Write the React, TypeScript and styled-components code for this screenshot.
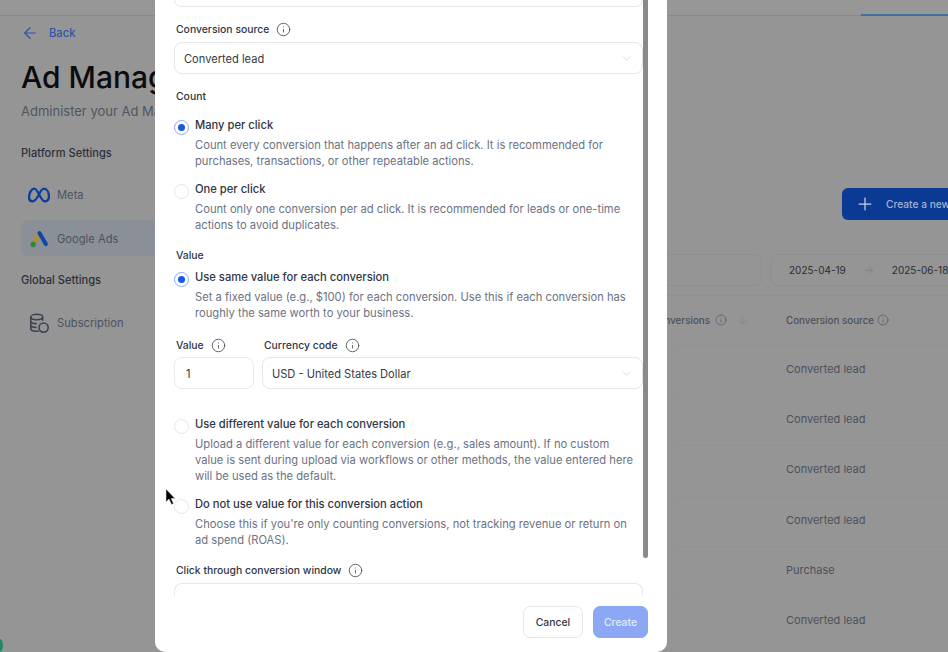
import React from "react";
import styled, { createGlobalStyle } from "styled-components";
import { ArrowLeft, ArrowDown, ArrowRight, ChevronDown, Info, Plus } from "lucide-react";

const GlobalStyle = createGlobalStyle`
  html, body {
    margin: 0;
    padding: 0;
    height: 100%;
    overflow: hidden;
    font-family: Inter, "Liberation Sans", sans-serif;
  }
  * { box-sizing: border-box; }
`;

const Page = styled.div`
  position: relative;
  display: flex;
  flex-direction: column;
  width: 948px;
  height: 652px;
  overflow: hidden;
  background: #959595;
`;

const TopBar = styled.div`
  flex: none;
  display: flex;
  justify-content: flex-end;
  height: 16px;
  border-bottom: 1px solid #8a8a8a;
  background: #979797;
`;

const TabLine = styled.div`
  width: 87px;
  height: 16px;
  border-bottom: 2px solid #3f6f9e;
`;

const Content = styled.div`
  flex: 1;
  display: flex;
  min-height: 0;
`;

const Sidebar = styled.aside`
  flex: none;
  width: 240px;
  padding: 9px 0 0 21px;
`;

const BackLink = styled.div`
  display: flex;
  align-items: center;
  gap: 10px;
  height: 16px;
  color: #2a55a8;
  font-size: 11.2px;
  font-weight: 500;
  svg { flex: none; }
`;

const Title = styled.h1`
  margin: 18px 0 0;
  font-size: 30px;
  line-height: 36px;
  font-weight: 500;
  color: #0c0c0e;
  white-space: nowrap;
`;

const Subtitle = styled.p`
  margin: 6px 0 0;
  font-size: 13px;
  line-height: 20px;
  color: #4f5564;
  white-space: nowrap;
`;

const NavHeading = styled.div<{ $top: number }>`
  margin-top: ${(p) => p.$top}px;
  font-size: 11.1px;
  line-height: 16px;
  font-weight: 500;
  color: #2b303a;
`;

const NavItem = styled.div<{ $active?: boolean; $top: number }>`
  display: flex;
  align-items: center;
  gap: 7px;
  height: 36px;
  margin-top: ${(p) => p.$top}px;
  padding: 1px 0 0 7px;
  border-radius: 8px;
  font-size: 11.2px;
  color: #4c5361;
  background: ${(p) => (p.$active ? "#8b8f97" : "transparent")};
`;

const NavIcon = styled.svg`
  flex: none;
  width: 22px;
  height: 22px;
`;

const Main = styled.main`
  flex: none;
  width: 900px;
  padding-top: 172px;
`;

const CreateNew = styled.div`
  display: flex;
  align-items: center;
  gap: 11px;
  width: 160px;
  height: 32px;
  margin-left: 602px;
  padding-left: 13px;
  border-radius: 6px;
  background: #0a3a94;
  color: #a5b3cf;
  font-size: 10.2px;
  font-weight: 500;
  white-space: nowrap;
  svg { flex: none; color: #c9d2e2; }
`;

const FilterRow = styled.div`
  display: flex;
  gap: 8px;
  height: 32px;
  margin-top: 34px;
  margin-left: 300px;
`;

const FilterBox = styled.div<{ $width: number }>`
  display: flex;
  align-items: center;
  gap: 17px;
  width: ${(p) => p.$width}px;
  padding-left: 18px;
  border: 1px solid #8f8f8f;
  border-radius: 8px;
  font-size: 10px;
  color: #2b2d33;
  white-space: nowrap;
  svg { flex: none; color: #7b7b7b; }
`;

const TableHead = styled.div`
  display: grid;
  grid-template-columns: 121px 1fr;
  height: 50px;
  margin-top: 9px;
  margin-left: 425px;
  border-top: 1px solid #909090;
  align-items: center;
  font-size: 9.8px;
  font-weight: 500;
  color: #4c515c;
`;

const SortCell = styled.div`
  display: flex;
  align-items: center;
  justify-content: flex-end;
  gap: 10px;
  padding-right: 38px;
  margin-top: -1px;
  white-space: nowrap;
  svg { flex: none; }
`;

const SortTitle = styled.span`
  margin-right: -5px;
`;

const HeadCell = styled.div`
  display: flex;
  align-items: center;
  gap: 3px;
  margin-top: -1px;
  white-space: nowrap;
  svg { flex: none; }
`;

const SortIcon = styled(ArrowDown)`
  color: #7f7f7f;
`;

const TableRow = styled.div`
  display: flex;
  align-items: center;
  height: 50.2px;
  margin-left: 437px;
  padding: 0 0 3px 108px;
  border-top: 1px solid #929292;
  border-left: 1px solid #929292;
  font-size: 11px;
  color: #4c515c;
`;

const DotCorner = styled.div`
  position: absolute;
  left: 0;
  bottom: 0;
  width: 8px;
  height: 13px;
  overflow: hidden;
`;

const GreenDot = styled.div`
  width: 7px;
  height: 13px;
  margin-left: -4px;
  border-radius: 50%;
  background: #1c8a60;
`;

const Modal = styled.div`
  position: absolute;
  top: 0;
  left: 155px;
  display: flex;
  flex-direction: column;
  width: 512px;
  height: 652px;
  border-radius: 0 0 10px 10px;
  background: #fff;
`;

const ModalBody = styled.div`
  position: relative;
  flex: none;
  height: 596px;
  padding: 0 24px 0 19px;
  overflow: hidden;
`;

const ScrollThumb = styled.div`
  position: absolute;
  top: 0;
  right: 19px;
  width: 5px;
  height: 558px;
  border-radius: 0 0 3px 3px;
  background: #8a8a8a;
`;

const CutFieldTop = styled.div`
  height: 7px;
  border: 1px solid #e7e8ec;
  border-top: 0;
  border-radius: 0 0 8px 8px;
`;

const CutFieldBottom = styled.div`
  height: 14px;
  margin-top: 5px;
  border: 1px solid #e7e8ec;
  border-bottom: 0;
  border-radius: 8px 8px 0 0;
`;

const Label = styled.div<{ $top?: number }>`
  display: flex;
  align-items: center;
  gap: 7px;
  height: 16px;
  margin-top: ${(p) => p.$top ?? 0}px;
  margin-left: 2px;
  font-size: 10.4px;
  font-weight: 500;
  color: #2f3644;
  white-space: nowrap;
  svg { flex: none; color: #4a5160; }
`;

const Select = styled.div`
  display: flex;
  align-items: center;
  justify-content: space-between;
  flex: 1;
  height: 32px;
  padding: 1px 9px 0;
  border: 1px solid #e4e6ea;
  border-radius: 8px;
  font-size: 11.1px;
  color: #333945;
  svg { color: #c3c6cd; }
`;

const SelectSpaced = styled(Select)`
  margin-top: 5px;
`;

const ValueInput = styled.div`
  display: flex;
  align-items: center;
  height: 32px;
  padding: 1px 0 0 11px;
  border: 1px solid #e9eaee;
  border-radius: 8px;
  font-size: 11.1px;
  color: #333945;
`;

const RadioRow = styled.div<{ $top: number }>`
  display: grid;
  grid-template-columns: 15px 1fr;
  column-gap: 6px;
  margin-top: ${(p) => p.$top}px;
`;

const Radio = styled.span<{ $checked?: boolean }>`
  display: flex;
  align-items: center;
  justify-content: center;
  width: 15px;
  height: 15px;
  margin-top: 3px;
  border-radius: 50%;
  border: 1px solid ${(p) => (p.$checked ? "#8aa8f5" : "#e6e7eb")};
  &::after {
    content: "";
    display: ${(p) => (p.$checked ? "block" : "none")};
    width: 7px;
    height: 7px;
    border-radius: 50%;
    background: #1557e6;
  }
`;

const RadioTitle = styled.div`
  font-size: 11.2px;
  line-height: 16px;
  font-weight: 500;
  color: #2f3644;
`;

const RadioDesc = styled.div`
  max-width: 440px;
  margin-top: 4px;
  font-size: 11.2px;
  line-height: 16px;
  color: #6b7283;
`;

const ValueGrid = styled.div`
  display: grid;
  grid-template-columns: 80px 1fr;
  column-gap: 8px;
  margin-top: 16px;
`;

const FieldColumn = styled.div`
  display: flex;
  flex-direction: column;
  gap: 4px;
`;

const ModalFooter = styled.div`
  display: flex;
  justify-content: flex-end;
  gap: 10px;
  padding: 10px 19px 0 0;
`;

const Button = styled.div<{ $primary?: boolean; $width: number }>`
  display: flex;
  align-items: center;
  justify-content: center;
  width: ${(p) => p.$width}px;
  height: 32px;
  border-radius: 7px;
  border: 1px solid ${(p) => (p.$primary ? "#8ca8f4" : "#e4e6ea")};
  background: ${(p) => (p.$primary ? "#8ca8f4" : "#fff")};
  color: ${(p) => (p.$primary ? "#e3eafc" : "#2f3644")};
  font-size: 10.4px;
  font-weight: 500;
`;

const Cursor = styled.svg`
  position: absolute;
  left: 165px;
  top: 488px;
  width: 12px;
  height: 18px;
`;

const InfoIcon = () => <Info size={15} strokeWidth={1.4} />;

const rows = [
  "Converted lead",
  "Converted lead",
  "Converted lead",
  "Converted lead",
  "Purchase",
  "Converted lead",
];

export default function App() {
  return (
    <>
      <GlobalStyle />
      <Page>
        <TopBar>
          <TabLine />
        </TopBar>
        <Content>
          <Sidebar>
            <BackLink>
              <ArrowLeft size={18} strokeWidth={1.6} />
              Back
            </BackLink>
            <Title>Ad Management</Title>
            <Subtitle>Administer your Ad Management settings</Subtitle>
            <NavHeading $top={24}>Platform Settings</NavHeading>
            <NavItem $top={15}>
              <NavIcon viewBox="1.5 1.5 21 21" fill="none">
                <path
                  d="M2.5 14.5C2.5 10 4.8 6 7.6 6C11 6 13.6 18 17.4 18C20 18 21.5 16 21.5 13.4C21.5 9.4 19.6 6 16.6 6C13 6 10.6 18 6 18C3.8 18 2.5 16.6 2.5 14.5Z"
                  stroke="#0b3f9e"
                  strokeWidth="2.2"
                  strokeLinejoin="round"
                />
              </NavIcon>
              Meta
            </NavItem>
            <NavItem $active $top={8}>
              <NavIcon viewBox="0 0 24 24" fill="none">
                <path d="M12 6L5.5 18" stroke="#b0902c" strokeWidth="4.4" strokeLinecap="round" />
                <path d="M12.5 5.5L19.5 17.5" stroke="#0d48a8" strokeWidth="4.4" strokeLinecap="round" />
                <circle cx="5.6" cy="18" r="3" fill="#2c8a3e" />
              </NavIcon>
              Google Ads
            </NavItem>
            <NavHeading $top={16}>Global Settings</NavHeading>
            <NavItem $top={16}>
              <NavIcon viewBox="0 0 24 24" fill="none" stroke="#3b4250" strokeWidth="1.7">
                <ellipse cx="9.5" cy="5.5" rx="6.5" ry="3" />
                <path d="M3 5.5V18c0 1.7 2.9 3 6.5 3H12M16 9.5V5.5M3 9.7c0 1.7 2.9 3 6.5 3M3 14c0 1.7 2.9 3 6.5 3" />
                <circle cx="17" cy="17" r="5" />
              </NavIcon>
              Subscription
            </NavItem>
          </Sidebar>
          <Main>
            <CreateNew>
              <Plus size={20} strokeWidth={1.5} />
              Create a new conversion
            </CreateNew>
            <FilterRow>
              <FilterBox $width={222} />
              <FilterBox $width={200}>
                2025-04-19
                <ArrowRight size={12} strokeWidth={1.2} />
                2025-06-18
              </FilterBox>
            </FilterRow>
            <TableHead>
              <SortCell>
                <SortTitle>Conversions</SortTitle>
                <Info size={12} strokeWidth={1.3} />
                <SortIcon size={11} strokeWidth={1.2} />
              </SortCell>
              <HeadCell>
                Conversion source
                <Info size={12} strokeWidth={1.3} />
              </HeadCell>
            </TableHead>
            {rows.map((row, i) => (
              <TableRow key={i}>{row}</TableRow>
            ))}
          </Main>
        </Content>
        <DotCorner>
          <GreenDot />
        </DotCorner>
        <Modal>
          <ModalBody>
            <ScrollThumb />
            <CutFieldTop />
            <Label $top={14}>
              Conversion source <InfoIcon />
            </Label>
            <SelectSpaced>
              Converted lead
              <ChevronDown size={13} strokeWidth={1.2} />
            </SelectSpaced>
            <Label $top={14}>Count</Label>
            <RadioRow $top={13}>
              <Radio $checked />
              <div>
                <RadioTitle>Many per click</RadioTitle>
                <RadioDesc>
                  Count every conversion that happens after an ad click. It is recommended for
                  purchases, transactions, or other repeatable actions.
                </RadioDesc>
              </div>
            </RadioRow>
            <RadioRow $top={12}>
              <Radio />
              <div>
                <RadioTitle>One per click</RadioTitle>
                <RadioDesc>
                  Count only one conversion per ad click. It is recommended for leads or one-time
                  actions to avoid duplicates.
                </RadioDesc>
              </div>
            </RadioRow>
            <Label $top={14}>Value</Label>
            <RadioRow $top={6}>
              <Radio $checked />
              <div>
                <RadioTitle>Use same value for each conversion</RadioTitle>
                <RadioDesc>
                  Set a fixed value (e.g., $100) for each conversion. Use this if each conversion
                  has roughly the same worth to your business.
                </RadioDesc>
              </div>
            </RadioRow>
            <ValueGrid>
              <FieldColumn>
                <Label>
                  Value <InfoIcon />
                </Label>
                <ValueInput>1</ValueInput>
              </FieldColumn>
              <FieldColumn>
                <Label>
                  Currency code <InfoIcon />
                </Label>
                <Select>
                  USD - United States Dollar
                  <ChevronDown size={13} strokeWidth={1.2} />
                </Select>
              </FieldColumn>
            </ValueGrid>
            <RadioRow $top={27}>
              <Radio />
              <div>
                <RadioTitle>Use different value for each conversion</RadioTitle>
                <RadioDesc>
                  Upload a different value for each conversion (e.g., sales amount). If no custom
                  value is sent during upload via workflows or other methods, the value entered here
                  will be used as the default.
                </RadioDesc>
              </div>
            </RadioRow>
            <RadioRow $top={12}>
              <Radio />
              <div>
                <RadioTitle>Do not use value for this conversion action</RadioTitle>
                <RadioDesc>
                  Choose this if you're only counting conversions, not tracking revenue or return on
                  ad spend (ROAS).
                </RadioDesc>
              </div>
            </RadioRow>
            <Label $top={14}>
              Click through conversion window <InfoIcon />
            </Label>
            <CutFieldBottom />
          </ModalBody>
          <ModalFooter>
            <Button $width={60}>Cancel</Button>
            <Button $primary $width={55}>
              Create
            </Button>
          </ModalFooter>
        </Modal>
        <Cursor viewBox="0 0 12 18">
          <path d="M1 1V14L4 11L6.5 16.5L8.5 15.5L6.2 10.5H10Z" fill="#000" stroke="#ddd" strokeWidth="0.6" />
        </Cursor>
      </Page>
    </>
  );
}
